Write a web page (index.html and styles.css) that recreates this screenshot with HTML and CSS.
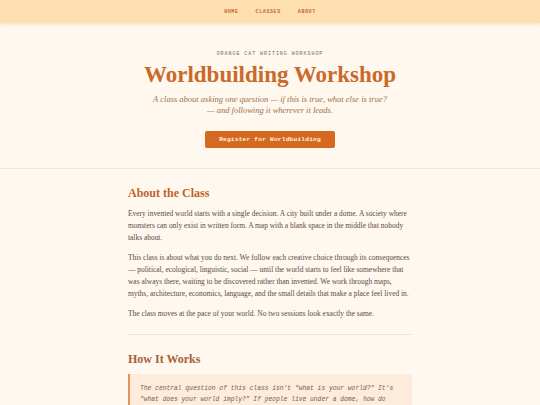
FILE: index.html
```html
<!DOCTYPE html>
<html>
<head>
<meta charset="utf-8">
<link rel="stylesheet" href="styles.css">
</head>
<body>
<nav class="nav">
  <a class="nav-link">Home</a>
  <a class="nav-link">Classes</a>
  <a class="nav-link">About</a>
</nav>
<header class="hero">
  <div class="eyebrow">Orange Cat Writing Workshop</div>
  <h1 class="title">Worldbuilding Workshop</h1>
  <p class="subtitle">A class about asking one question — if this is true, what else is true? —&nbsp;and following it wherever it leads.</p>
  <a class="button">Register for Worldbuilding</a>
</header>
<main class="content">
  <section class="section">
    <h2 class="heading">About the Class</h2>
    <p class="para">Every invented world starts with a single decision. A city built under a dome. A society where monsters can only exist in written form. A map with a blank space in the middle that nobody talks about.</p>
    <p class="para">This class is about what you do next. We follow each creative choice through its consequences — political, ecological, linguistic, social — until the world starts to feel like somewhere that was always there, waiting to be discovered rather than invented. We work through maps, myths, architecture, economics, language, and the small details that make a place feel lived in.</p>
    <p class="para">The class moves at the pace of your world. No two sessions look exactly the same.</p>
  </section>
  <hr class="rule">
  <section class="section">
    <h2 class="heading heading-dark">How It Works</h2>
    <blockquote class="quote">The central question of this class isn't "what is your world?" It's "what does your world imply?" If people live under a dome, how do they trade, what do they fear, and what stories do they tell about the sky?</blockquote>
  </section>
</main>
</body>
</html>
```
FILE: styles.css
```css
html, body {
  margin: 0;
  padding: 0;
}
body {
  background: #fff8ee;
  font-family: "Liberation Serif", "DejaVu Serif", serif;
  color: #5b4a3e;
}
.nav {
  height: 23px;
  background: #ffdeb0;
  display: flex;
  justify-content: center;
  align-items: center;
  gap: 17px;
  box-shadow: 0 1px 4px rgba(200, 140, 70, 0.25);
}
.nav-link {
  font-family: "Liberation Mono", monospace;
  font-weight: bold;
  font-size: 5px;
  letter-spacing: 0.6px;
  text-transform: uppercase;
  color: #c0682c;
}
.hero {
  display: flex;
  flex-direction: column;
  align-items: center;
  padding: 28px 0 20px;
  border-bottom: 1px solid #f1e6d6;
}
.eyebrow {
  font-family: "Liberation Mono", monospace;
  font-size: 5px;
  letter-spacing: 0.95px;
  text-transform: uppercase;
  color: #7a6a5c;
}
.title {
  margin: 3px 0 0;
  font-size: 23px;
  line-height: 30px;
  font-weight: bold;
  color: #c96a2b;
}
.subtitle {
  margin: 4px 0 0;
  width: 244px;
  text-align: center;
  font-style: italic;
  font-size: 8.5px;
  line-height: 11px;
  color: #a0704a;
}
.button {
  margin-top: 15px;
  width: 130px;
  height: 17px;
  box-sizing: border-box;
  display: flex;
  align-items: center;
  justify-content: center;
  background: #d4691f;
  border-radius: 2px;
  font-family: "Liberation Mono", monospace;
  font-weight: bold;
  font-size: 6.2px;
  letter-spacing: 0.2px;
  color: #fff4e6;
}
.content {
  width: 284px;
  margin: 0 auto;
  padding-top: 17px;
}
.heading {
  margin: 0 0 8px;
  font-size: 12px;
  line-height: 14px;
  font-weight: bold;
  color: #c0632a;
}
.heading-dark {
  color: #a8603a;
}
.para {
  margin: 0 0 8px;
  font-size: 7.45px;
  line-height: 12px;
}
.rule {
  border: none;
  border-top: 1px solid #f1e6d6;
  margin: 14px 0 17px;
}
.quote {
  margin: 0;
  padding: 9px 10px 8px 10px;
  background: #fdebdc;
  border-left: 2px solid #e0935a;
  font-family: "Liberation Mono", monospace;
  font-style: italic;
  font-size: 6.3px;
  line-height: 11px;
  color: #7a6050;
}
```
